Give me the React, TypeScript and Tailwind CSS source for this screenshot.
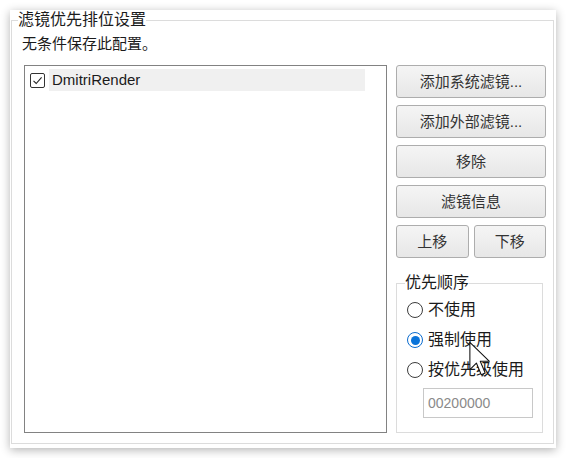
import React from "react";

const font = "font-['Liberation_Sans','Noto_Sans_CJK_SC',sans-serif]";

function Button({ label, className = "" }: { label: string; className?: string }) {
  return (
    <button
      className={`h-[33px] rounded-[3px] border border-[#adadad] bg-gradient-to-b from-[#f5f5f5] to-[#e7e7e7] text-[15px] leading-[20px] text-[#333] ${className}`}
    >
      {label}
    </button>
  );
}

function Radio({ label, checked = false }: { label: string; checked?: boolean }) {
  return (
    <div className="flex h-[30px] items-center gap-[5px]">
      {checked ? (
        <span className="flex h-4 w-4 items-center justify-center rounded-full border border-[#0a6ccf] bg-white">
          <span className="h-[9px] w-[9px] rounded-full bg-[#0a74da]" />
        </span>
      ) : (
        <span className="h-4 w-4 rounded-full border border-[#3c3c3c] bg-white" />
      )}
      <span className="text-[16px] leading-[22px] text-[#1b1b1b]">{label}</span>
    </div>
  );
}

// mouse pointer sitting over the second radio
function Cursor() {
  return (
    <svg
      className="pointer-events-none absolute left-[62px] top-[16px]"
      width="22"
      height="36"
      viewBox="0 0 12.5 20"
    >
      <path
        d="M0.5 0.5 L0.5 16 L4.2 12.3 L7 19 L9.2 18 L6.4 11.3 L11.6 11.3 Z"
        fill="#fff"
        stroke="#111"
        strokeWidth="0.6"
        strokeLinejoin="round"
      />
    </svg>
  );
}

export default function App() {
  return (
    <div className={`min-h-screen bg-white pl-[10px] pt-[10px] ${font}`}>
      <div className="h-[438px] w-[546px] bg-white shadow-[0_2px_9px_rgba(0,0,0,0.3)]">
        <fieldset className="ml-[1px] mr-[2px] h-[434px] border border-[#dcdcdc] p-0">
          <legend className="ml-[6px] p-0 text-[16px] leading-[20px] text-[#1b1b1b]">
            滤镜优先排位设置
          </legend>

          <div className="pl-[10px] pt-[4px]">
            <p className="text-[15px] leading-[20px] text-[#1b1b1b]">无条件保存此配置。</p>

            <div className="ml-[2px] mt-[11px] flex gap-[9px]">
              {/* filter list */}
              <div className="h-[368px] w-[363px] border border-[#828282] bg-white pt-[3px]">
                <div className="flex h-[22px] items-center">
                  <span className="ml-[5px] flex h-[15px] w-[15px] items-center justify-center rounded-[2px] border border-[#333] bg-white">
                    <svg width="11" height="11" viewBox="0 0 11 11">
                      <path d="M1.5 5.8 L4.2 8.5 L9.6 2.4" fill="none" stroke="#222" strokeWidth="1.1" />
                    </svg>
                  </span>
                  <span className="ml-[4px] flex h-[22px] w-[316px] items-center bg-[#f0f0f0] pl-[3px] text-[15px] text-[#1b1b1b]">
                    DmitriRender
                  </span>
                </div>
              </div>

              {/* right column */}
              <div className="flex w-[150px] flex-col">
                <div className="flex flex-col gap-[7px]">
                  <Button label="添加系统滤镜..." />
                  <Button label="添加外部滤镜..." />
                  <Button label="移除" />
                  <Button label="滤镜信息" />
                  <div className="flex gap-[5px]">
                    <Button label="上移" className="flex-1" />
                    <Button label="下移" className="flex-1" />
                  </div>
                </div>

                <fieldset className="relative mt-[14px] h-[161px] w-[147px] border border-[#dcdcdc] p-0">
                  <legend className="ml-[8px] p-0 text-[16px] leading-[22px] text-[#1b1b1b]">优先顺序</legend>
                  <div className="pl-[10px] pt-[1px]">
                    <Radio label="不使用" />
                    <div className="relative">
                      <Radio label="强制使用" checked />
                      <Cursor />
                    </div>
                    <Radio label="按优先级使用" />
                    <input
                      readOnly
                      value="00200000"
                      className="ml-[16px] mt-[3px] h-[30px] w-[110px] border border-[#c8c8c8] bg-white pl-[4px] font-['Liberation_Sans',sans-serif] text-[14px] text-[#8a8a8a] outline-none"
                    />
                  </div>
                </fieldset>
              </div>
            </div>
          </div>
        </fieldset>
      </div>
    </div>
  );
}
